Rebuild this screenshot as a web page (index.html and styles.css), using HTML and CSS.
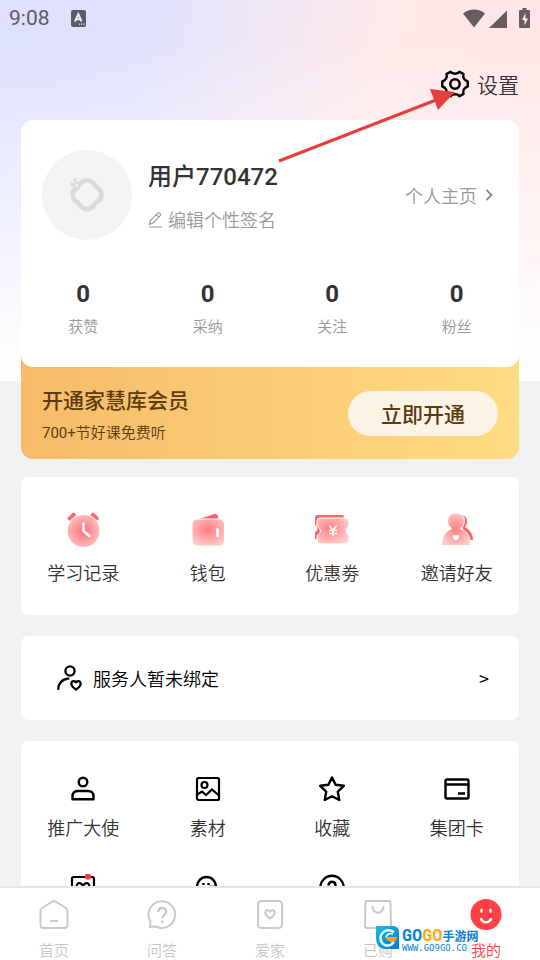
FILE: index.html
```html
<!DOCTYPE html>
<html lang="zh-CN">
<head>
<meta charset="utf-8">
<meta name="viewport" content="width=device-width, initial-scale=1">
<title>我的</title>
<link rel="stylesheet" href="styles.css">
</head>
<body>
<div class="app">
  <main class="content">
    <div class="status">
      <span class="time">9:08</span>
      <svg class="status-a" width="15" height="17" viewBox="0 0 15 17"><rect width="15" height="17" rx="2" fill="#5c5c68"/><path d="M4 11.500 7.300 4l3.300 7.500M5.300 9.200h4" fill="none" stroke="#eef" stroke-width="1.900"/><path d="M8 14.200h1.200m1 0h1.200m1 0h1.200" stroke="#eef" stroke-width="1.200"/></svg>
      <svg class="status-icons" width="68" height="21" viewBox="0 0 68 21"><g fill="#675c5e"><path d="M0 5.500C6.500 0 16 0 22 5.500L11 19.500z"/><path d="M44 2.500v17.500H26z"/><path d="M59.500 0h4v2H66q1 0 1 1v16q0 1-1 1h-9q-1 0-1-1V3q0-1 1-1h2.500z"/></g><path d="m62.500 5-3.500 7h2.500v5.500l3.500-7h-2.500z" fill="#ffecec"/></svg>
    </div>
    <div class="topbar">
      <button class="settings" type="button">
        <svg width="28" height="28" viewBox="0 0 28 28" fill="none" stroke="#000" stroke-width="2.500" stroke-linejoin="round"><path d="M9.500 1.800C11.500 4.400 16.500 4.400 18.500 1.800L22.500 4C21.500 7.500 23.500 10.500 26.700 11.500V16.500C23.500 17.500 21.500 20.500 22.500 24L18.500 26.200C16.500 23.600 11.500 23.600 9.500 26.200L5.500 24C6.500 20.500 4.500 17.500 1.300 16.500V11.500C4.500 10.500 6.500 7.500 5.500 4Z"/><circle cx="14" cy="14" r="4.700"/></svg>
        <span>设置</span>
      </button>
    </div>

    <section class="profile">
      <div class="profile-head">
        <div class="avatar">
          <svg width="36" height="36" viewBox="0 0 36 36" fill="none" stroke="#dadada"><path d="M12 5.500Q18 1.500 24 5.500Q26 9.500 30 12Q35 18 30 23.500Q26 25.500 24 29.500Q18 35 12 29.500Q10 25.500 6 23.500Q2 19 4.500 13.500Q9 11 12 5.500Z" stroke-width="4.500"/><path d="M-1 -1h9v9h-9z" fill="#f3f3f3" stroke="none"/><g stroke-width="1.500"><circle cx="7.500" cy="8" r="2.600" fill="#f3f3f3"/><circle cx="3" cy="7.500" r="1.200"/><circle cx="6" cy="3" r="1.200"/></g></svg>
        </div>
        <div class="who">
          <h1>用户770472</h1>
          <button class="sign" type="button"><svg width="15" height="16" viewBox="0 0 15 16" fill="none" stroke="#999" stroke-width="1.200"><path d="M1.500 12.500 2.500 8.500 9.800 1.200q1-1 2.200.200t.200 2.300L5 11z M8.500 2.800l2.400 2.400M1 15h13"/></svg><span>编辑个性签名</span></button>
        </div>
        <a class="home-link" href="#profile"><span>个人主页</span><svg width="8" height="12" viewBox="0 0 8 12" fill="none" stroke="#888" stroke-width="1.800"><path d="m1.500 1 5 5-5 5"/></svg></a>
      </div>
      <div class="grid stats">
        <a href="#likes"><b>0</b><span>获赞</span></a>
        <a href="#accepted"><b>0</b><span>采纳</span></a>
        <a href="#following"><b>0</b><span>关注</span></a>
        <a href="#fans"><b>0</b><span>粉丝</span></a>
      </div>
    </section>

    <section class="member">
      <div>
        <h2>开通家慧库会员</h2>
        <p><span class="count">700+</span>节好课免费听</p>
      </div>
      <button type="button">立即开通</button>
    </section>

    <section class="card grid services">
      <a href="#records"><svg width="36" height="36" viewBox="0 0 36 36"><defs><radialGradient id="g1" cx=".5" cy=".5" r=".55"><stop offset="0" stop-color="#ff7074"/><stop offset="1" stop-color="#ffc4c5"/></radialGradient></defs><path d="m5 6.500 3.500-3.500M31.500 6.500 28 3" stroke="#ff6a6c" stroke-width="4.500" stroke-linecap="round"/><circle cx="18.500" cy="19" r="16.500" fill="url(#g1)" stroke="#fff"/><path d="M18.500 11.500V19l6 5" fill="none" stroke="#fff" stroke-width="2.600" stroke-linecap="round" stroke-linejoin="round"/></svg><span>学习记录</span></a>
      <a href="#wallet"><svg width="36" height="36" viewBox="0 0 36 36"><defs><radialGradient id="g2" cx=".5" cy=".4" r=".7"><stop offset="0" stop-color="#ff7c7f"/><stop offset="1" stop-color="#ffd1d2"/></radialGradient></defs><path d="M8 7.500 24 2q3-1 4 2l.500 5z" fill="#ff6568"/><rect x="2" y="7" width="32.500" height="27" rx="5" fill="url(#g2)" stroke="#fff"/><path d="M27.500 17.500v6" stroke="#fff" stroke-width="3" stroke-linecap="round"/></svg><span>钱包</span></a>
      <a href="#coupons"><svg width="36" height="36" viewBox="0 0 36 36"><defs><radialGradient id="g3" cx=".4" cy=".4" r=".75"><stop offset="0" stop-color="#ff7e80"/><stop offset="1" stop-color="#ffd8d8"/></radialGradient></defs><path d="M1 5q0-2 2-2h25q2 0 2 2v22H1v-7q5-3 0-7z" fill="#ff676a"/><path d="M6 6H32q3 0 3 3v5q-6 5 0 10v5q0 3-3 3H6q-3 0-3-3v-5q7-5 0-10V9q0-3 3-3z" fill="url(#g3)" stroke="#fff"/><path d="m15.500 13.500 3.500 5 3.500-5M19 18v6M15 18.500h8M15 21.500h8" fill="none" stroke="#fff" stroke-width="1.600"/></svg><span>优惠劵</span></a>
      <a href="#invite"><svg width="36" height="36" viewBox="0 0 36 36"><defs><radialGradient id="g4" cx=".5" cy=".5" r=".6"><stop offset="0" stop-color="#ff7e80"/><stop offset="1" stop-color="#ffd0d0"/></radialGradient></defs><path d="M20 2.500C29 3 30 11 26 15c5 3 8 7 8 13h-7z" fill="#ff6568"/><path d="M17 1c9.500 0 11 11 4.500 15.500C27 18.500 31.500 24 31.500 32q0 1.500-1.500 1.500H4Q2.500 33.500 2.500 32C3 24 7 18.500 12.500 16.500 6 12 7.500 1 17 1z" fill="url(#g4)" stroke="#fff"/><path d="M17 28.500c-5-3-3.500-7 0-5 3.500-2 5 2 0 5z" fill="#fff"/></svg><span>邀请好友</span></a>
    </section>

    <a class="card binding" href="#binding">
      <svg width="26" height="26" viewBox="0 0 26 26" fill="none" stroke="#000" stroke-width="2.300"><circle cx="13" cy="6" r="4.600"/><path d="M1.300 24c0-5.500 4-10 10-10.500" stroke-linecap="round"/><path d="M19 24.500c-8-5-4-11 0-7.300 4-3.700 8 2.300 0 7.300z"/></svg>
      <span>服务人暂未绑定</span>
      <span class="more">&gt;</span>
    </a>

    <section class="card grid tools">
      <a href="#ambassador"><svg width="26" height="26" viewBox="0 0 26 26" fill="none" stroke="#000" stroke-width="2.400"><circle cx="13" cy="6" r="4.300"/><path d="M2.500 23.200v-2.700q0-5.500 5.500-5.500h10q5.500 0 5.500 5.500v2.700z" stroke-linejoin="round"/></svg><span>推广大使</span></a>
      <a href="#materials"><svg width="26" height="26" viewBox="0 0 26 26" fill="none" stroke="#000" stroke-width="2.200"><rect x="2" y="2" width="22" height="22" rx="1.500"/><circle cx="9.500" cy="9" r="3"/><path d="m2 18.500 5-3 4 3.500 6-5.500 7 6"/></svg><span>素材</span></a>
      <a href="#favorites"><svg width="26" height="26" viewBox="0 0 26 26" fill="none" stroke="#000" stroke-width="2.400" stroke-linejoin="round"><path d="m13 1.500 3.600 7.300 8.200 1-6 5.900 1.500 8.300-7.300-3.800-7.300 3.800 1.500-8.300-6-5.900 8.200-1z"/></svg><span>收藏</span></a>
      <a href="#cards"><svg width="26" height="26" viewBox="0 0 26 26" fill="none" stroke="#000" stroke-width="2.400"><rect x="1.500" y="3.500" width="23" height="19" rx="1.500"/><path d="M2 8.500h22M14 17.500h7"/></svg><span>集团卡</span></a>
      <a href="#rewards" aria-label="礼遇"><svg width="26" height="26" viewBox="0 0 26 26" fill="none" stroke="#000" stroke-width="2.200"><rect x="2" y="3" width="22" height="20" rx="1.500"/><path d="M7 15c-2-7 5-8 6-2 1-6 8-5 6 2"/><circle cx="18" cy="2.500" r="3.200" fill="#ff3c41" stroke="none"/></svg></a>
      <a href="#service" aria-label="客服"><svg width="26" height="26" viewBox="0 0 26 26" fill="none" stroke="#000" stroke-width="2.400"><circle cx="11.500" cy="12.500" r="9.500"/><path d="M8.500 9v2m5-2v2M14 13h7"/></svg></a>
      <a href="#help" aria-label="帮助"><svg width="26" height="26" viewBox="0 0 26 26" fill="none" stroke="#000" stroke-width="2.400"><circle cx="13" cy="13.500" r="11.700"/><path d="M9.500 11.500c0-5 7-5 7 0 0 3-3.500 3-3.500 6"/></svg></a>
    </section>
  </main>

  <nav class="tabs">
    <a href="#home"><svg width="32" height="32" viewBox="0 0 32 32" fill="none" stroke="#cacaca" stroke-width="2" stroke-linejoin="round"><path d="M2.500 11.500q0-1.500 1.500-2.500L14.500 2.500q1.500-1 3 0L28 9q1.500 1 1.500 2.500V26q0 3-3 3h-21q-3 0-3-3zM12 22h8"/></svg><span>首页</span></a>
    <a href="#questions"><svg width="32" height="32" viewBox="0 0 32 32" fill="none" stroke="#cacaca" stroke-width="2"><path d="M4.200 22A13.300 13.300 0 1 1 10 27.500L3.500 28q1.500-2 .700-6z" stroke-linejoin="round"/><path d="M12.300 13c0-5.500 7.800-5 7.800-.500 0 3.500-3.800 3.500-3.800 7M16.300 21.500v2.500" stroke-width="2.300"/></svg><span>问答</span></a>
    <a href="#family"><svg width="32" height="32" viewBox="0 0 32 32" fill="none" stroke="#cacaca" stroke-width="2"><rect x="4" y="2" width="24" height="27" rx="3.500"/><path d="M16 19.500c-8-5-4-11 0-7 4-4 8 2 0 7z" stroke-width="2.200"/></svg><span>爱家</span></a>
    <a href="#purchased"><svg width="32" height="32" viewBox="0 0 32 32" fill="none" stroke="#cacaca" stroke-width="2"><path d="M5 2h22q1.500 0 1.500 1.500L29 27q0 2-2 2H5q-2 0-2-2l.500-23.500Q3.500 2 5 2z"/><path d="M10.500 7c0 9 11 9 11 0" stroke-width="2.200"/></svg><span>已购</span></a>
    <a class="active" href="#me"><svg width="32" height="32" viewBox="0 0 32 32"><circle cx="16" cy="15.500" r="15.500" fill="#ff4044"/><path d="M11.500 11v1.500m9-1.500v1.500M11 20c2 4.500 8 4.500 10 0" fill="none" stroke="#fff" stroke-width="2.400" stroke-linecap="round"/></svg><span>我的</span></a>
    <div class="mark">
      <svg width="24" height="24" viewBox="0 0 24 24"><defs><linearGradient id="gm" x2="1" y2="1"><stop offset="0" stop-color="#16bce9"/><stop offset="1" stop-color="#0878d2"/></linearGradient></defs><path d="M0 0h18q5 1 5 6v17H9Q0 22 0 12z" fill="url(#gm)"/><path d="M18 6Q11 2 6.500 7T7 18q6 4 11-2" fill="none" stroke="#e5f7ff" stroke-width="2.500"/><path d="M9 11h12l-2 5h-4l-4-2z" fill="#f9a51a"/><path d="M17 8q-5-2-7 3" fill="none" stroke="#fff" stroke-width="1.500"/></svg>
      <div class="mark-text">
        <div class="mark-name"><b>GO</b><b class="gold">GO</b><span>手游网</span></div>
        <small>WWW.GO9GO.CO</small>
      </div>
    </div>
  </nav>
  <svg class="arrow" width="180" height="76" viewBox="0 0 180 76"><path d="M1 74 158 13" stroke="#e83d3f" stroke-width="3"/><path d="m177 5-25-3 8 21z" fill="#e83d3f"/></svg>
</div>
</body>
</html>
```
FILE: styles.css
```css
* { box-sizing: border-box; }

body {
  margin: 0;
  background: #f1f1f1;
  color: #333;
  font-family: Roboto, "Noto Sans CJK SC", sans-serif;
  font-size: 18px;
  font-weight: 350;
}

h1, h2, p { margin: 0; }

a { color: inherit; text-decoration: none; }

button {
  border: 0;
  padding: 0;
  background: none;
  color: inherit;
  font: inherit;
}

svg { flex: none; display: block; }

.app {
  position: relative;
  display: flex;
  flex-direction: column;
  height: 100vh;
}

.content {
  flex: 1;
  min-height: 0;
  overflow: hidden;
  padding: 0 21px;
  background:
    linear-gradient(to bottom, rgba(255, 255, 255, 0) 0, rgba(255, 255, 255, 0) 40px, #fefefe 360px) top / 100% 381px no-repeat,
    linear-gradient(100deg, #dde0ff 0%, #e1e2fe 25%, #f1e6f4 46%, #ffe8e8 66%, #ffe5e5 100%) top / 100% 381px no-repeat;
}

.status {
  display: flex;
  align-items: center;
  height: 36px;
  margin: 0 -12px;
  color: #5c5c68;
}

.time { font-size: 21px; font-weight: 400; line-height: 38px; }
.status-a { margin-left: 21px; }
.status-icons { margin-left: auto; }

.topbar {
  display: flex;
  align-items: center;
  justify-content: flex-end;
  height: 84px;
  padding-top: 12px;
}

.settings {
  display: flex;
  align-items: center;
  gap: 8px;
  font-size: 21px;
}

.profile {
  position: relative;
  height: 247px;
  padding-top: 30px;
  border-radius: 12px;
  background: #fff;
}

.profile-head {
  display: flex;
  align-items: center;
  padding: 0 26px 0 21px;
}

.avatar {
  display: grid;
  place-items: center;
  width: 90px;
  height: 90px;
  border-radius: 50%;
  background: #f3f3f3;
}

.who { flex: 1; margin-left: 16px; padding-top: 2px; }

.who h1 {
  font-size: 24px;
  font-weight: 500;
  line-height: 36px;
}

.sign {
  display: flex;
  align-items: center;
  gap: 5px;
  margin-top: 12px;
  color: #999;
  line-height: 27px;
}

.home-link {
  display: flex;
  align-items: center;
  gap: 8px;
  color: #999;
}

.grid {
  display: grid;
  grid-template-columns: repeat(4, 1fr);
}

.grid a {
  display: flex;
  flex-direction: column;
  align-items: center;
}

.stats { margin-top: 36px; }
.stats b { font-size: 24px; font-weight: 700; line-height: 36px; }
.stats span { margin-top: 3px; color: #999; font-size: 15px; line-height: 24px; }

.member {
  display: flex;
  align-items: center;
  justify-content: space-between;
  height: 104px;
  margin-top: -12px;
  padding: 12px 21px 0;
  border-radius: 0 0 12px 12px;
  background: linear-gradient(to right, #f5bb68, #ffdc82);
  color: #5b3b10;
}

.member h2 { padding-top: 4px; font-size: 21px; font-weight: 500; line-height: 32px; }
.member p { margin-top: 4px; font-size: 15px; line-height: 24px; }
.count { font-weight: 400; }

.member button {
  width: 150px;
  height: 45px;
  border-radius: 23px;
  background: #faf3e6;
  font-size: 21px;
  font-weight: 500;
}

.card {
  border-radius: 8px;
  background: #fff;
}

.services {
  height: 138px;
  margin-top: 18px;
  padding-top: 35px;
}

.services span { margin-top: 12px; line-height: 27px; }

.binding {
  display: flex;
  align-items: center;
  gap: 10px;
  height: 84px;
  margin-top: 21px;
  padding: 0 30px 0 36px;
  color: #000;
}

.more { margin-left: auto; font-family: "Noto Sans CJK SC", sans-serif; font-weight: 400; }

.tools {
  margin-top: 21px;
  padding: 35px 0;
  row-gap: 32px;
}

.tools span { margin-top: 13px; line-height: 27px; }

.tabs {
  position: relative;
  display: grid;
  grid-template-columns: repeat(5, 1fr);
  height: 74px;
  padding-top: 11px;
  border-top: 2px solid #e6e6e6;
  background: #fff;
  color: #c6c6c6;
  font-size: 15px;
}

.tabs a {
  display: flex;
  flex-direction: column;
  align-items: center;
  gap: 8px;
  line-height: 24px;
}

.tabs .active { color: #ff4044; }

.mark {
  position: absolute;
  left: 376px;
  top: 38px;
  display: flex;
  gap: 2px;
  color: #0a82d4;
}

.mark-name {
  display: flex;
  align-items: center;
  height: 18px;
  font-size: 12px;
  font-weight: 700;
}

.mark b { font-family: "Liberation Sans Narrow", "Roboto Condensed", "Liberation Sans", sans-serif; font-size: 17px; font-weight: 700; }
.mark .gold { color: #ffa80f; }
.mark small { display: block; font: 400 9px/8px "DejaVu Sans Mono", monospace; }

.arrow {
  position: absolute;
  left: 278px;
  top: 87px;
}
```
